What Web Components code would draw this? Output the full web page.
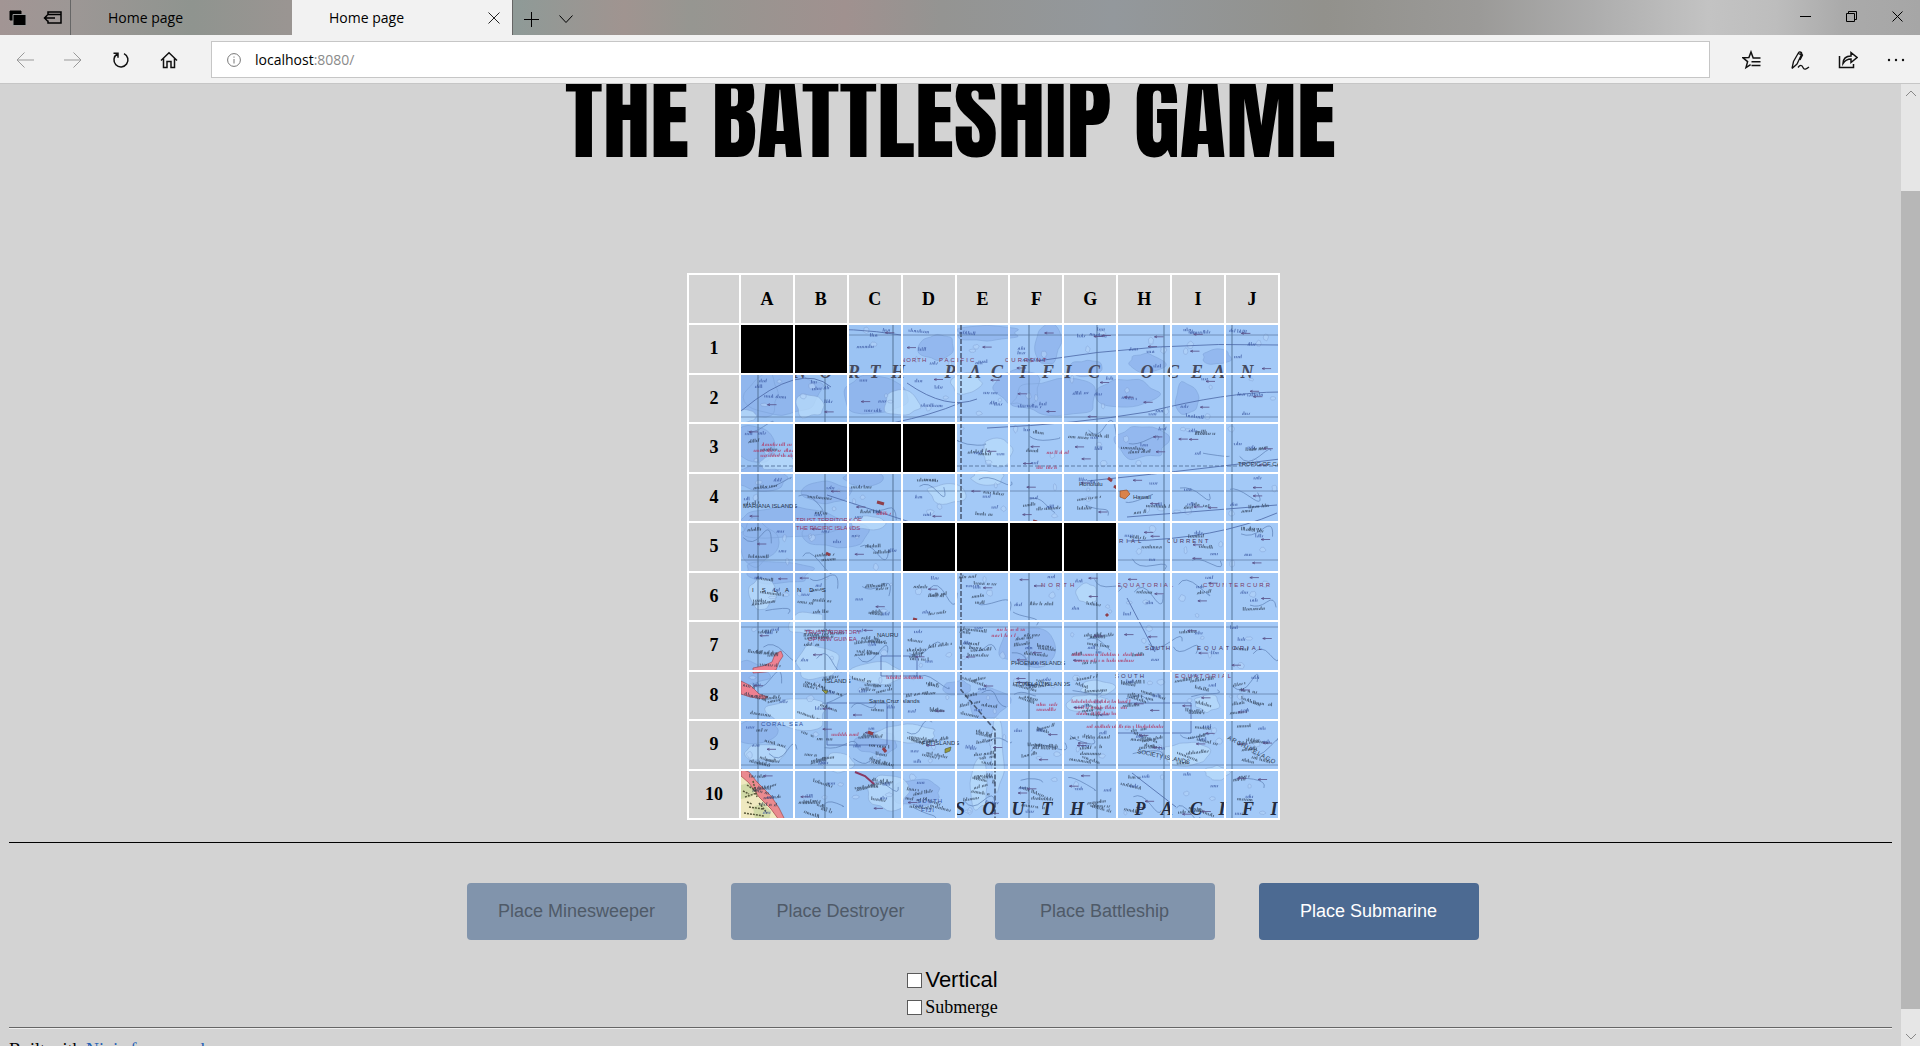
<!DOCTYPE html>
<html lang="en">
<head>
<meta charset="utf-8">
<title>Home page</title>
<style>
html, body { height: 100%; margin: 0; }
body { background: #d3d3d3; overflow: hidden; }
</style>
</head>
<body>
<browser-window>
  <tab-strip slot="chrome">
    <browser-tab>Home page</browser-tab>
    <browser-tab active>Home page</browser-tab>
  </tab-strip>
  <tool-bar slot="chrome"></tool-bar>
  <game-page>
    <span slot="title">THE BATTLESHIP GAME</span>
    <game-board slot="board" ships="A1 B1 B3 C3 D3 D5 E5 F5 G5"></game-board>
    <ship-button slot="ships" disabled>Place Minesweeper</ship-button>
    <ship-button slot="ships" disabled>Place Destroyer</ship-button>
    <ship-button slot="ships" disabled>Place Battleship</ship-button>
    <ship-button slot="ships">Place Submarine</ship-button>
    <ship-option slot="options" large>Vertical</ship-option>
    <ship-option slot="options">Submerge</ship-option>
  </game-page>
  <scroll-bar slot="scroll"></scroll-bar>
</browser-window>
<script>
class Part extends HTMLElement {
  connectedCallback() {
    if (this.shadowRoot) return;
    this.attachShadow({ mode: 'open' }).innerHTML = this.view();
  }
}

customElements.define('browser-window', class extends Part {
  view() {
    return `<style>
      :host { display: flex; flex-direction: column; height: 100vh; font-family: "Open Sans", "Noto Sans", sans-serif; }
      .body { display: flex; flex: 1; min-height: 0; border-top: 1px solid #c6c6c6; }
      main { flex: 1; min-width: 0; overflow: hidden; }
    </style>
    <slot name="chrome"></slot>
    <div class="body"><main><slot></slot></main><slot name="scroll"></slot></div>`;
  }
});

customElements.define('tab-strip', class extends Part {
  view() {
    return `<style>
      :host { display: flex; height: 35px; flex: none;
        background: linear-gradient(90deg, #a29594 0, #9c9795 4%, #8f948f 10%, #9a9592 15%, #8f9a97 27%, #a09490 32.5%, #969691 36%, #a0918f 44%, #949492 49%, #93989c 58%, #92918c 69%, #9b9a98 77%, #adadad 83%, #c3c3c3 89%, #bdbdbd 92.5%, #aaa 96%, #a6a6a6 100%); }
      button { border: 0; padding: 0; background: none; display: flex; align-items: center; justify-content: center; }
      svg { display: block; fill: none; stroke: #000; }
      .group { display: flex; width: 71px; border-right: 1px solid #666; box-sizing: border-box; padding-left: 1px; }
      .group button { flex: 1; }
      .new button { width: 35px; }
      .new { display: flex; padding-top: 2px; }
      .space { flex: 1; }
      .window { display: flex; }
      .window button { width: 46px; padding-bottom: 3px; }
    </style>
    <div class="group">
      <button aria-label="Tabs you've set aside"><svg width="18" height="18" viewBox="0 0 18 18"><path d="M1 2h11v9H1z" fill="#000"/><path d="M4 5.500h13v11H4z" fill="#000" stroke="#999"/></svg></button>
      <button aria-label="Set these tabs aside"><svg width="20" height="16" viewBox="0 0 20 16" stroke-width="1.500"><path d="M5 5V2h13v11H5v-2.500M5 4.500h13M1 8h11M4.500 5L1.500 8l3 3"/></svg></button>
    </div>
    <slot></slot>
    <div class="new">
      <button aria-label="New tab"><svg width="16" height="16" viewBox="0 0 16 16"><path d="M8.500 1v15M1 8.500h15"/></svg></button>
      <button aria-label="Show tab previews"><svg width="14" height="10" viewBox="0 0 14 10"><path d="M.5 1.500l6.500 7 6.500-7"/></svg></button>
    </div>
    <div class="space"></div>
    <div class="window">
      <button aria-label="Minimize"><svg width="11" height="11" viewBox="0 0 11 11"><path d="M0 5.500h11"/></svg></button>
      <button aria-label="Restore"><svg width="11" height="11" viewBox="0 0 11 11"><path d="M.5 2.500h8v8h-8zM2.500 2.500v-2h8v8h-2"/></svg></button>
      <button aria-label="Close"><svg width="11" height="11" viewBox="0 0 11 11"><path d="M.5.5l10 10M10.500.5l-10 10"/></svg></button>
    </div>`;
  }
});

customElements.define('browser-tab', class extends Part {
  view() {
    return `<style>
      :host { display: flex; align-items: center; width: 221px; box-sizing: border-box; padding: 0 9px 0 37px; font-size: 14px; color: #000; }
      :host([active]) { background: #f2f2f2; border-right: 1px solid #666; }
      span { flex: 1; }
      button { display: none; border: 0; padding: 0; background: none; width: 18px; height: 18px; align-items: center; justify-content: center; }
      :host([active]) button { display: flex; }
      svg { fill: none; stroke: #222; }
    </style><span><slot></slot></span>
    <button aria-label="Close tab"><svg width="12" height="12" viewBox="0 0 12 12"><path d="M.5.5l11 11M11.500.5l-11 11"/></svg></button>`;
  }
});

customElements.define('tool-bar', class extends Part {
  view() {
    return `<style>
      :host { display: flex; align-items: center; height: 48px; flex: none; background: #f2f2f2; }
      button { border: 0; padding: 2px 0 0; background: none; width: 48px; height: 48px; display: flex; align-items: center; justify-content: center; }
      svg { fill: none; stroke: #111; stroke-width: 1.500; }
      button:disabled svg { stroke: #999; stroke-width: 1; }
      .left { display: flex; width: 211px; box-sizing: border-box; padding-left: 1px; }
      .right { display: flex; }
      form { flex: 1; display: flex; align-items: center; box-sizing: border-box; height: 37px; margin: 0 18px 0 0; padding: 2px 0 0 15px; gap: 14px; background: #fff; border: 1px solid #c6c6c6; }
      form svg { stroke: #777; stroke-width: 1; }
      label { position: relative; flex: 1; font-size: 14px; line-height: 20px; }
      .port { color: #8a8a8a; }
      input { position: absolute; inset: 0; width: 100%; border: 0; padding: 0; background: none; font: inherit; outline: 0; }
    </style>
    <div class="left">
      <button disabled aria-label="Back"><svg width="18" height="16" viewBox="0 0 18 16"><path d="M18 8H1M8.500.5L1 8l7.500 7.500"/></svg></button>
      <button disabled aria-label="Forward"><svg width="18" height="16" viewBox="0 0 18 16"><path d="M0 8h17M9.500.5L17 8l-7.500 7.500"/></svg></button>
      <button aria-label="Refresh"><svg width="18" height="18" viewBox="0 0 18 18"><path d="M5.200 3A7 7 0 1 0 12 2.600M1.500 2.200h4.500v4.500"/></svg></button>
      <button aria-label="Home"><svg width="18" height="18" viewBox="0 0 18 18"><path d="M1 9.500L9 1.800l8 7.700M3.500 7.500v9H7v-6h4v6h3.500v-9"/></svg></button>
    </div>
    <form><svg width="14" height="14" viewBox="0 0 14 14"><circle cx="7" cy="7" r="6.400"/><path d="M7 6v4.500M7 3.500v1.200"/></svg>
      <label><span>localhost</span><span class="port">:8080/</span><input type="text" aria-label="Address"></label></form>
    <div class="right">
      <button aria-label="Favorites"><svg width="20" height="20" viewBox="0 0 20 20"><path d="M18.500 8H11.200L9 2 6.900 7.600 1 7.800l4.600 3.800L4 17.600l4.600-3M9.500 11.800h9M9.500 15.500h9"/></svg></button>
      <button aria-label="Add notes"><svg width="20" height="20" viewBox="0 0 20 20" style="stroke-width:1.300"><path d="M2 18.500L3.500 11.500 8.500 2.800C9.500 1 12.500 2.200 11.500 4.500L7 14 2 18.500M8.500 3.500l3 1.500M10.500 2.500l2 2.500-2.500 5M8 17.500c2-2.800 4-2.800 5 0s3.500 1.500 6-.5"/></svg></button>
      <button aria-label="Share"><svg width="20" height="20" viewBox="0 0 20 20"><path d="M1.500 6v11.500h14V14M5 13.500c.2-5 3-7.500 8-7.500V2.500l6 5-6 5V9c-4 0-6 1.500-8 4.500z"/></svg></button>
      <button aria-label="Settings and more"><svg width="18" height="4" viewBox="0 0 18 4" style="fill:#111;stroke:none"><circle cx="2" cy="2" r="1.200"/><circle cx="9" cy="2" r="1.200"/><circle cx="16" cy="2" r="1.200"/></svg></button>
    </div>`;
  }
});

customElements.define('scroll-bar', class extends Part {
  view() {
    return `<style>
      :host { display: flex; flex-direction: column; width: 19px; background: #e6e6e6; flex: none; }
      svg { flex: none; margin: 0 auto; fill: none; stroke: #888; }
      .before { flex: 89; }
      .thumb { flex: 818; background: #b7b7b7; }
    </style>
    <svg width="12" height="18" viewBox="0 0 12 18"><path d="M1 12l5-5 5 5"/></svg>
    <div class="before"></div><div class="thumb"></div>
    <svg width="12" height="37" viewBox="0 0 12 37"><path d="M1 25l5 5 5-5"/></svg>`;
  }
});

customElements.define('game-page', class extends Part {
  view() {
    return `<style>
      :host { display: block; margin: 0 9px; font-family: "Liberation Serif", "Times New Roman", serif; font-size: 18px; color: #000; }
      h1 { margin: -15px 0 109px; font: 400 95px/95px Anton, Impact, sans-serif; text-align: center; }
      .board { display: flex; justify-content: center; padding-left: 66px; }
      .sea { margin: 22px 0 40px; border: 0; height: 1px; background: #000; }
      .ships { display: flex; justify-content: center; gap: 44px; padding-left: 44px; }
      .options { display: flex; flex-direction: column; align-items: center; margin-top: 26px; padding-left: 4px; }
      .end { margin: 7px 0 9px; border: 0; border-top: 1px solid #666; border-bottom: 1px solid #eee; }
      a { color: #1f5fb4; text-decoration: none; }
      footer { line-height: 24px; white-space: nowrap; }
    </style>
    <h1><slot name="title"></slot></h1>
    <div class="board"><slot name="board"></slot></div>
    <hr class="sea">
    <div class="ships"><slot name="ships"></slot></div>
    <div class="options"><slot name="options"></slot></div>
    <hr class="end">
    <footer>Built with <a href="#">Ninja framework</a></footer>`;
  }
});

customElements.define('ship-button', class extends Part {
  view() {
    return `<style>
      :host { display: block; }
      button { display: block; width: 220px; height: 57px; border: 0; border-radius: 4px; background: #4c6a92; color: #fff; font: 18px "Liberation Sans", Arial, sans-serif; }
      button:disabled { background: #8194ac; color: #4f5a68; }
    </style><button ${this.hasAttribute('disabled') ? 'disabled' : ''}><slot></slot></button>`;
  }
});

customElements.define('ship-option', class extends Part {
  view() {
    return `<style>
      :host { display: block; }
      label { display: flex; align-items: center; gap: 3px; height: 26px; }
      :host([large]) label { height: 28px; font: 22px "Liberation Sans", Arial, sans-serif; }
      input { appearance: none; width: 15px; height: 15px; margin: 0; border: 1px solid #5a5a5a; background: #fff; }
    </style><label><input type="checkbox"><slot></slot></label>`;
  }
});

/* The sea chart behind the cells, in units of one pixel from the board's corner. */
function seaChart() {
  let seed = 77;
  const rnd = () => {
    seed = (seed + 0x6d2b79f5) | 0;
    let t = Math.imul(seed ^ (seed >>> 15), 1 | seed);
    t = (t + Math.imul(t ^ (t >>> 7), 61 | t)) ^ t;
    return ((t ^ (t >>> 14)) >>> 0) / 4294967296;
  };
  const between = (a, b) => a + rnd() * (b - a);
  const blob = (x, y, rx, ry) => {
    const pts = [];
    for (let i = 0; i < 16; i++) {
      const a = i / 16 * 6.283, k = between(0.7, 1.1);
      pts.push([x + Math.cos(a) * rx * k, y + Math.sin(a) * ry * k]);
    }
    const mid = (p, q) => `${((p[0] + q[0]) / 2).toFixed(1)} ${((p[1] + q[1]) / 2).toFixed(1)}`;
    let d = 'M' + mid(pts[15], pts[0]);
    pts.forEach((p, i) => { d += `Q${p[0].toFixed(1)} ${p[1].toFixed(1)} ${mid(p, pts[(i + 1) % 16])}`; });
    return d + 'Z';
  };
  /* a run of short strokes that stands for one small place name */
  const name = (x, y, w, tilt) => {
    let d = '';
    for (let i = 0; i < w; i += 1.600) {
      if (i > 6 && rnd() < 0.12) continue;
      const h = rnd() < 0.25 ? 3.600 : 2.200;
      d += `M${(x + i).toFixed(1)} ${(y + tilt * i).toFixed(1)}l${between(-0.3, 1).toFixed(1)} ${-h}`;
    }
    return d;
  };
  let deep = '', pale = '';
  for (const [x, y, rx, ry] of [[70, 120, 26, 30], [112, 65, 18, 14], [95, 120, 45, 24], [188, 122, 36, 22], [127, 72, 16, 10], [250, 75, 20, 14], [300, 60, 36, 10], [360, 70, 15, 22], [370, 125, 50, 20], [330, 115, 24, 20], [440, 120, 34, 16], [460, 90, 20, 10], [500, 125, 14, 18], [455, 170, 28, 18], [70, 170, 24, 20], [75, 205, 30, 14], [140, 220, 26, 12], [175, 205, 20, 10], [100, 250, 60, 18], [70, 270, 22, 24], [150, 262, 36, 14], [340, 375, 28, 22], [60, 400, 24, 14], [90, 300, 40, 12], [270, 415, 16, 8], [70, 460, 24, 14], [190, 470, 22, 12], [300, 430, 24, 18], [230, 520, 28, 14], [400, 95, 18, 9], [530, 84, 16, 8]])
    deep += blob(x, y, rx, ry);
  for (const [x, y, rx, ry] of [[60, 143, 12, 7], [122, 132, 16, 14], [215, 130, 22, 14], [280, 110, 16, 12], [310, 180, 18, 14], [260, 220, 22, 12], [90, 190, 18, 9], [300, 205, 18, 8], [75, 320, 14, 18], [120, 350, 22, 12], [130, 390, 24, 20], [110, 440, 34, 18], [190, 400, 28, 14], [400, 320, 12, 12], [410, 415, 20, 8], [400, 430, 22, 10], [80, 480, 22, 10], [220, 460, 32, 10], [150, 490, 18, 10], [200, 520, 22, 18], [310, 480, 8, 40], [292, 510, 9, 30], [500, 480, 26, 14], [530, 500, 14, 8], [520, 430, 14, 10], [180, 250, 18, 8]])
    pale += blob(x, y, rx, ry);
  let dark = '', navy = '', red = '', arrows = '', curves = '', rings = '';
  for (let r = 0; r < 10; r++) {
    for (let c = 0; c < 10; c++) {
      const x0 = 54 + c * 54, y0 = 52 + r * 49.500;
      const busy = r < 2 ? 1 : r < 5 ? 2 : r < 6 ? (c < 5 ? 4 : 1) : (c > 6 && r === 6 ? 1 : r === 9 && c > 4 ? 3 : 6);
      for (let i = 0; i < busy; i++) {
        const tilt = r > 6 ? between(-0.3, 0.4) : between(-0.15, 0.15);
        const mark = name(x0 + between(2, 28), y0 + between(6, 44), between(10, 24), tilt);
        if (r < 2) navy += mark; else dark += mark;
      }
      for (let i = 0; i < 2; i++) navy += name(x0 + between(3, 42), y0 + between(5, 45), 7, 0);
      for (let i = 0; i < (c > 4 ? 2 : 1); i++)
        arrows += `M${(x0 + between(4, 38)).toFixed(1)} ${(y0 + between(5, 44)).toFixed(1)}h9m-9 0l2.500 -1m-2.500 1l2.500 1`;
      for (let i = 0; i < 2; i++)
        rings += blob(x0 + between(4, 48), y0 + between(4, 44), between(1.500, 4), between(1.500, 4));
      if (r > 1)
        curves += `M${(x0 + between(0, 30)).toFixed(1)} ${(y0 + between(6, 40)).toFixed(1)}q${between(3, 12).toFixed(1)} ${between(-12, 12).toFixed(1)} ${between(14, 22).toFixed(1)} ${between(-6, 8).toFixed(1)}t${between(5, 12).toFixed(1)} ${between(-6, 12).toFixed(1)}`;
    }
  }
  for (const [x, y, w] of [[75, 173, 34], [67, 179, 42], [74, 184, 36], [385, 430, 60], [388, 436, 52], [390, 442, 40], [385, 383, 70], [388, 389, 58], [310, 358, 28], [305, 364, 24], [400, 455, 76], [145, 463, 26], [200, 406, 36], [350, 433, 20], [350, 438, 18], [350, 196, 20], [360, 181, 22], [190, 242, 14]])
    red += name(x, y, w, 0);
  const letters = (s, xs, y, size, fill) => `<text x="${xs.join(' ')}" y="${y}" font-size="${size}" fill="${fill}">${s}</text>`;
  const small = (s, x, y, fill, gap, turn) => `<text x="${x}" y="${y}" font-size="6" fill="${fill}"${gap ? ` letter-spacing="${gap}"` : ''}${turn ? ` transform="rotate(${turn} ${x} ${y})"` : ''}>${s}</text>`;
  return `<svg viewBox="0 0 593 547" preserveAspectRatio="none" aria-hidden="true">
    <rect width="593" height="547" fill="#a3c9f7"/>
    <rect x="54" y="52" width="160" height="497" fill="#96bdf1" opacity=".55"/>
    <path d="${deep}" fill="#8aaeea" opacity=".6" stroke="#6f93cf" stroke-width=".7"/>
    <path d="${pale}" fill="#b9dcfb" opacity=".75" stroke="#7f9fce" stroke-width=".6"/>
    <path d="${rings}" fill="#b3d3fa" opacity=".6" stroke="#7794c8" stroke-width=".6"/>
    <path d="M71 52v495M138 52v495M206 52v495M342 52v495M410 52v495M477 52v495M545 52v495" stroke="#4f6d91" stroke-width="1.200" opacity=".75"/>
    <path d="M274 52v365l34 40v90" fill="none" stroke="#4b5c78" stroke-width="1.600" stroke-dasharray="5 2"/>
    <path d="M54 62h539M54 144h539M54 218h539M54 287h539M54 354h539M54 421h539M54 492h539" stroke="#5d7ba3" stroke-width=".9" opacity=".8"/>
    <path d="M54 193h539" stroke="#5d7ba3" stroke-dasharray="4 2"/>
    <path d="M205 150q40-8 68-20M54 76q60-30 160-14M350 88q120-20 243-16M300 155q90-4 160-16 80-20 133-20M400 208q80-8 193-22M440 268q90-2 150-28M54 138q60-50 90-24M220 110q40 28 70 16M140 222l92 30M440 325l28 54M430 430h74v30h-74zM445 500l44 34M194 383h36v20h-36zM140 430h60v42h-60zM440 244l150-12" fill="none" stroke="#4a66a5" stroke-width=".8"/>
    <path d="${curves}" fill="none" stroke="#5d80b5" stroke-width=".7"/>
    <path d="M54 408l10 5 8 8 9 3-4 2-14-2-9-3zM66 395l10-2 9-4 3-8 6-3 2 5-4 6-3 8-10 2-13 1z" fill="#ee8191" stroke="#94404e" stroke-width=".6"/>
    <path d="M54 496l10 8 8 12 12 10 8 10 6 14H54z" fill="#efe9c0"/>
    <path d="M54 512l8-2 6 8-4 6-10 2zM66 534l10-4 8 8-2 9H68z" fill="#c9d6a0" opacity=".8"/>
    <path d="M54 496l8 3 8 10 14 14 8 12 6 12h-6l-8-11-12-12-10-14-8-7z" fill="#ea8a8f" stroke="#a04848" stroke-width=".7"/>
    <path d="M60 512l9 6M58 524l12-4M62 534l14 2M72 530l8 10M57 540l20 3M66 508l4 16M56 518l6 3M60 529l5 2" stroke="#5a5a3c" stroke-width="1.500" stroke-dasharray="2 1" fill="none"/>
    <path d="${dark}" stroke="#26344a" stroke-width=".9" opacity=".7"/>
    <path d="${navy}" stroke="#34509c" stroke-width=".9" opacity=".7"/>
    <path d="${red}" stroke="#b0446f" stroke-width=".9" opacity=".85"/>
    <path d="${arrows}" fill="none" stroke="#584f86" stroke-width=".8"/>
    <path d="M433 218l7-1 3 4-5 5-5-2z" fill="#d9824a" stroke="#8a4320" stroke-width=".6"/>
    <path d="M427 213l3 2M421 205l4 3M190 229l7 2M181 459l5 2M196 475l3 4M346 248l4 1M419 341l2 2M139 280l4 2M226 346l4 1" stroke="#8f3f4a" stroke-width="3"/>
    <path d="M168 499l10 4 9 8" fill="none" stroke="#8a3a63" stroke-width="2"/>
    <path d="M258 476l6-2-1 4-5 2zM135 417l6 1-2 3z" fill="#9a9a3c" stroke="#4c5a3a" stroke-width=".6"/>
    <g font-family="Liberation Serif, Times New Roman, serif" font-style="italic" font-weight="700" text-anchor="middle">
      ${letters('NORTHPACIFICOCEAN', [113, 139, 167, 188, 211, 263, 288, 310, 336, 361, 381, 407, 460, 486, 510, 532, 560], 105, 18, '#454a5e')}
      ${letters('SOUTHPACIFI', [273, 302, 331, 360, 390, 453, 480, 509, 535, 561, 587], 542, 18, '#242c40')}
    </g>
    <g font-family="Liberation Sans, Arial, sans-serif">
      ${small('NORTH', 214, 89, '#7b3b66', 1)}${small('PACIFIC', 252, 89, '#7b3b66', 2)}${small('CURRENT', 318, 89, '#7b3b66', 2)}
      ${small('MARIANA ISLANDS', 56, 235, '#26344a')}${small('Santa Cruz Islands', 182, 430, '#26344a')}
      ${small('TROPIC OF CA', 551, 193, '#26344a')}${small('Honolulu', 392, 213, '#26344a')}${small('Hawaii', 446, 226, '#26344a')}
      ${small('RIAL', 432, 270, '#4a3560', 3)}${small('CURRENT', 480, 270, '#4a3560', 2)}
      ${small('TRUST TERRITORY OF', 109, 249, '#8f3768')}${small('THE PACIFIC ISLANDS', 109, 257, '#8f3768')}
      ${small('TRUST TERRITORY', 118, 361, '#8f3768')}${small('OF NEW GUINEA', 121, 368, '#8f3768')}
      ${small('NORTH', 354, 314, '#7b3b66', 3)}${small('EQUATORIAL', 430, 314, '#7b3b66', 2)}${small('COUNTERCURR', 516, 314, '#7b3b66', 2)}
      ${small('SOUTH', 458, 377, '#4a3560', 1)}${small('EQUATORIAL', 510, 377, '#4a3560', 3)}
      ${small('SOUTH', 428, 405, '#4a3560', 2)}${small('EQUATORIAL', 488, 405, '#7b3b66', 2)}
      ${small('ISLANDS', 65, 319, '#1b2436', 8)}${small('NAURU', 190, 364, '#26344a')}${small('PHOENIX ISLANDS', 324, 392, '#26344a')}
      ${small('TOKELAU ISLANDS', 328, 413, '#26344a')}${small('FIJI ISLANDS', 235, 472, '#26344a')}${small('CORAL SEA', 74, 453, '#34509c', 1)}
      ${small('SOCIETY ISLANDS', 450, 480, '#26344a', 0, 12)}${small('SOUTH', 230, 530, '#34509c', 1)}${small('FIJI', 234, 539, '#34509c', 1)}
      ${small('ARCHIPELAGO', 540, 466, '#26344a', 1, 28)}${small('ISLANDS', 138, 410, '#26344a')}
    </g>
  </svg>`;
}

customElements.define('game-board', class extends Part {
  view() {
    const ships = (this.getAttribute('ships') || '').split(' ');
    const cols = [...'ABCDEFGHIJ'];
    const rows = Array.from({ length: 10 }, (_, r) => `<tr><th scope="row">${r + 1}</th>${cols.map(c =>
      `<td${ships.includes(c + (r + 1)) ? ' class="ship"' : ''}></td>`).join('')}</tr>`).join('');
    return `<style>
      :host { display: grid; }
      svg, table { grid-area: 1 / 1; }
      svg { width: 100%; height: 100%; min-height: 0; contain: size; }
      table { z-index: 1; width: 593px; height: 547px; table-layout: fixed; border-collapse: collapse; font-size: 18px; }
      th, td { border: 2px solid #fff; padding: 0; }
      th { background: #d3d3d3; font-weight: 700; }
      thead tr { height: 50px; }
      tr > :first-child { width: 50px; }
      .ship { background: #000; }
    </style>${seaChart()}
    <table><thead><tr><th aria-label="Row"></th>${cols.map(c => `<th scope="col">${c}</th>`).join('')}</tr></thead><tbody>${rows}</tbody></table>`;
  }
});
</script>
</body>
</html>
